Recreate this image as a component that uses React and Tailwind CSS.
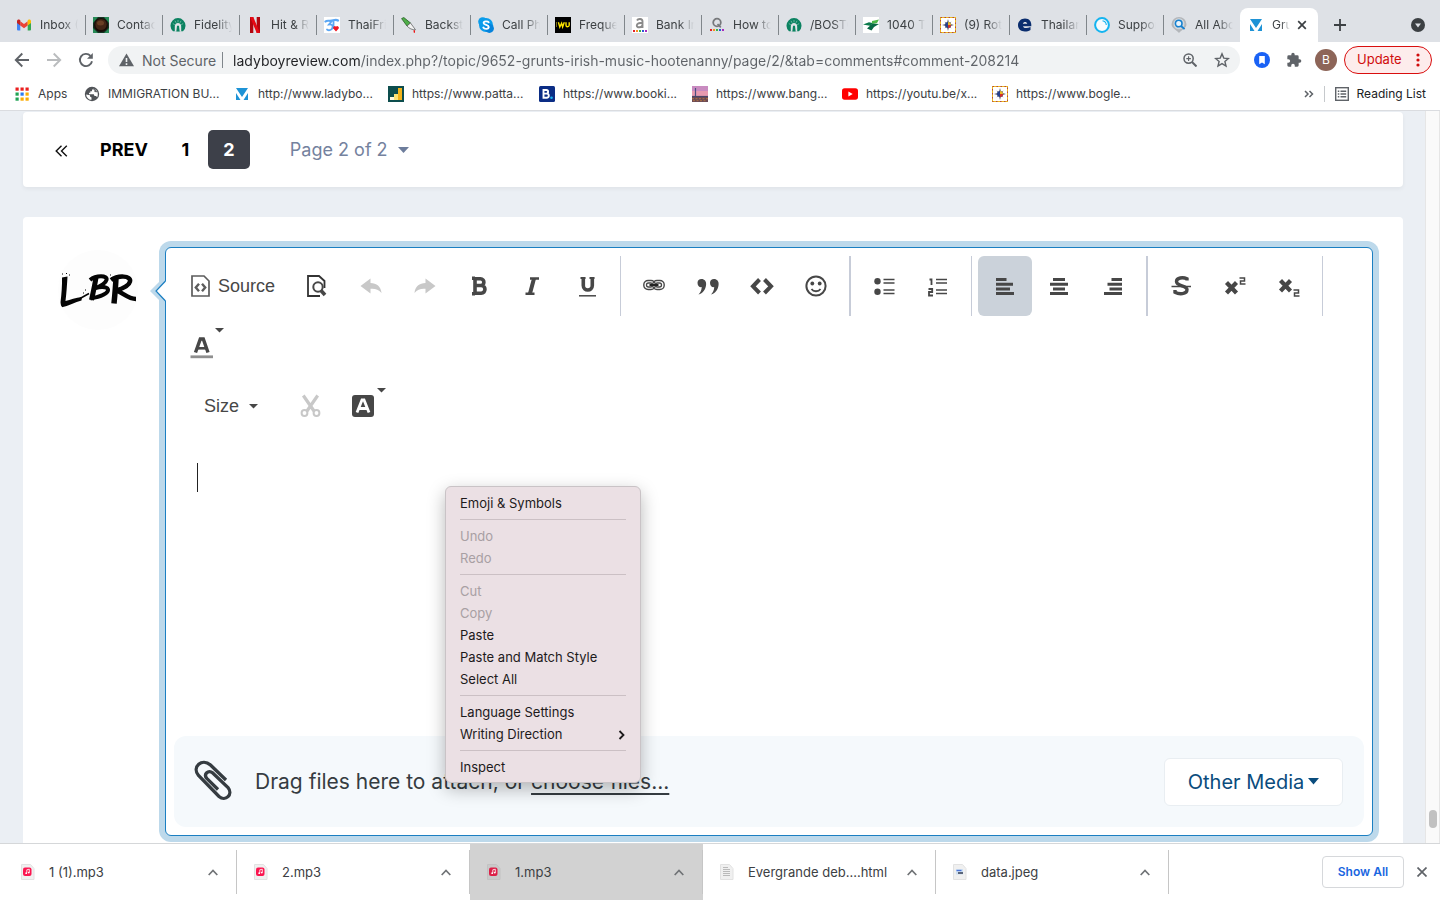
import React from "react";

const ICON = "block shrink-0";

/* ---------- favicons ---------- */

function Gmail() {
  return (
    <svg className={ICON} width="16" height="16" viewBox="0 0 16 16">
      <path d="M1 4v8.500a1 1 0 0 0 1 1h2.300V7.200z" fill="#4285f4" />
      <path d="M15 4v8.500a1 1 0 0 1-1 1h-2.300V7.200z" fill="#34a853" />
      <path d="M4.300 4.300v4.200L8 11.300l3.700-2.800V4.300L8 7.100z" fill="#ea4335" />
      <path d="M1 4.200C1 2.600 2.700 2 3.900 2.900l.4.300v5.300L1 6z" fill="#c5221f" />
      <path d="M15 4.200c0-1.600-1.700-2.200-2.900-1.300l-.4.300v5.300L15 6z" fill="#fbbc04" />
    </svg>
  );
}
function Coffee() {
  return (
    <svg className={ICON} width="16" height="16" viewBox="0 0 16 16">
      <rect width="16" height="16" fill="#163524" />
      <path d="M0 0h5L0 6zM16 0v6l-5-6zM0 16v-5l5 5zM16 16h-5l5-5z" fill="#278a57" />
      <circle cx="8" cy="8" r="7" fill="#1a0d08" />
      <circle cx="8" cy="7.500" r="5.600" fill="#432515" />
      <ellipse cx="7.500" cy="6" rx="3.500" ry="2.500" fill="#6a3f24" />
    </svg>
  );
}
function Fidelity() {
  return (
    <svg className={ICON} width="16" height="16" viewBox="0 0 16 16">
      <path d="M3 14.200A7.500 7.500 0 1 1 13 14.200z" fill="#0b8261" />
      <path d="M4.800 14.500V9.800C4.800 7.200 6 6 8 6s3.200 1.200 3.200 3.800v4.700z" fill="#dfe3e6" />
      <path d="M6.300 14.500 7 8.800h2l.7 5.700z" fill="#0b8261" />
      <path d="M8 3v2.400M5 3.800l1 2M11 3.800l-1 2M2.800 6.500l2 1.300M13.200 6.500l-2 1.300" stroke="#8cc7b5" strokeWidth="0.700" />
    </svg>
  );
}
function Netflix() {
  return (
    <svg className={ICON} width="16" height="16" viewBox="0 0 16 16">
      <path d="M3 0h3.300v16H3zM9.700 0H13v16H9.700z" fill="#b1060f" />
      <path d="M3 0h3.300L13 16H9.700z" fill="#e50914" />
    </svg>
  );
}
function ThaiFriendly() {
  return (
    <svg className={ICON} width="16" height="16" viewBox="0 0 16 16">
      <rect width="16" height="16" fill="#fff" />
      <path d="M1.500 4.500c1.500-1.500 3.500-.3 6-.8s4.500-1.500 6.500-.2" fill="none" stroke="#5aa6f4" strokeWidth="2.200" strokeLinecap="round" />
      <path d="M7.500 4.500 5 7.500c3-.3 4 .8 3.500 3-.5 2.500-3.500 3.500-5.500 2M9.500 5v6" fill="none" stroke="#5aa6f4" strokeWidth="1.800" strokeLinecap="round" />
      <path d="M12 14.500 9.300 11.500a1.600 1.600 0 0 1 2.700-1.700 1.600 1.600 0 0 1 2.700 1.700z" fill="#f01823" />
    </svg>
  );
}
function Knife() {
  return (
    <svg className={ICON} width="16" height="16" viewBox="0 0 16 16">
      <path d="M.6 1.600 2.800.5 9.500 6 6 9z" fill="#4fae49" stroke="#245c25" strokeWidth="0.800" />
      <path d="M6 9 9.500 6l5 6.800c-3 .2-6.500-1.300-8.500-3.800z" fill="#f2f2f2" stroke="#555" strokeWidth="0.700" />
      <path d="M12.500 13.200H14v2.600h-1.200z" fill="#e11" />
    </svg>
  );
}
function Skype() {
  return (
    <svg className={ICON} width="16" height="16" viewBox="0 0 16 16">
      <circle cx="8" cy="8" r="7" fill="#0a9ceb" />
      <circle cx="4.700" cy="4.700" r="4.500" fill="#0a9ceb" />
      <circle cx="11.400" cy="11.400" r="4.500" fill="#0683dc" />
      <path d="M10.700 5.300C9.700 3.900 5.600 3.900 5.600 6c0 2.300 5.200 1.600 5.200 4.100 0 2.200-4.500 2.300-5.500.4" fill="none" stroke="#fff" strokeWidth="1.800" strokeLinecap="round" />
    </svg>
  );
}
function WesternUnion() {
  return (
    <svg className={ICON} width="16" height="16" viewBox="0 0 16 16">
      <rect width="16" height="16" fill="#000" />
      <path d="M1.500 5v5" stroke="#7a6d13" />
      <path d="M3.400 5.300 4.800 10 6.600 6.300l1 3.700 1.700-4.700M11 5.300v3c0 2 3 2 3.200 0v-3" fill="none" stroke="#ffe600" strokeWidth="1.400" />
    </svg>
  );
}
function DotsRow({ y }) {
  return (
    <g>
      <rect x="1" y={y} width="2" height="2" fill="#e5202b" />
      <rect x="4" y={y} width="2" height="2" fill="#f7931e" />
      <rect x="7" y={y} width="2" height="2" fill="#39b54a" />
      <rect x="10" y={y} width="2" height="2" fill="#2a5bd7" />
      <rect x="13" y={y} width="2" height="2" fill="#a72bbf" />
    </g>
  );
}
function Agoda() {
  return (
    <svg className={ICON} width="16" height="16" viewBox="0 0 16 16">
      <rect width="16" height="16" fill="#fff" />
      <path d="M5 3.500C6 1.400 10.500 1.300 10.500 4.300v6.700M10.500 5.800C7 5.800 4.800 6.300 4.800 8.400c0 2.700 4.500 2.500 5.700-.3" fill="none" stroke="#8a8a8a" strokeWidth="1.900" />
      <DotsRow y={13} />
    </svg>
  );
}
function QDots() {
  return (
    <svg className={ICON} width="16" height="16" viewBox="0 0 16 16">
      <circle cx="8" cy="5.500" r="3.800" fill="none" stroke="#77797c" strokeWidth="1.800" />
      <path d="m8.500 7 3.300 3.300" stroke="#77797c" strokeWidth="1.700" />
      <DotsRow y={12} />
    </svg>
  );
}
function GreenBird() {
  return (
    <svg className={ICON} width="16" height="16" viewBox="0 0 16 16">
      <rect width="16" height="16" fill="#fff" />
      <path d="M0 7.500 6 5.200l3.500.8L8 9z" fill="#0b7a4b" />
      <path d="M9 4 16 2.500l-2 3.500-5 1z" fill="#4db748" />
      <path d="M4 11.500 9.500 6.500l6.500.5-5 3-2.500 3.500z" fill="#086845" />
    </svg>
  );
}
function Compass() {
  return (
    <svg className={ICON} width="16" height="16" viewBox="0 0 16 16">
      <rect width="16" height="16" fill="#fff" />
      <rect x="0.500" y="0.500" width="15" height="15" fill="none" stroke="#ecb91c" />
      <rect x="0.500" y="0.500" width="15" height="15" fill="none" stroke="#b5483f" strokeDasharray="1.500 2.500" />
      <path d="m8 2 1.200 4L11.500 4.500 10 6.800l4 1.200-4 1.200 1.500 2.300L9.200 10 8 14 6.800 10l-2.300 1.500L6 9.200 2 8l4-1.200-1.500-2.300L6.800 6z" fill="#6b6e78" />
      <circle cx="8" cy="8" r="3" fill="#26418c" />
      <path d="M8 8V5A3 3 0 0 1 11 8z" fill="#e8b923" />
      <path d="M8 8h3A3 3 0 0 1 8 11z" fill="#d22b2b" />
    </svg>
  );
}
function Expat() {
  return (
    <svg className={ICON} width="16" height="16" viewBox="0 0 16 16">
      <path d="M1 8.300C1 4.300 4 1.500 8 1.500c4.500 0 6.800 3.300 6.300 7.700H6c.5 2.300 4 2.400 7.500.8v3C11.500 14 10 14.500 8 14.500c-4.300 0-7-2.500-7-6.200zM5.800 6.700h4.400c-.2-2.300-3.800-2.400-4.400 0z" fill="#0a2d6e" fillRule="evenodd" />
    </svg>
  );
}
function Ring() {
  return (
    <svg className={ICON} width="16" height="16" viewBox="0 0 16 16">
      <circle cx="8" cy="8" r="6.900" fill="#f7fbfd" stroke="#14b4f0" strokeWidth="2" />
      <path d="M8.500 3.800A4.500 4.500 0 0 1 12.300 8" fill="none" stroke="#14b4f0" strokeWidth="1.100" />
    </svg>
  );
}
function PinSearch() {
  return (
    <svg className={ICON} width="16" height="16" viewBox="0 0 16 16">
      <path d="M8 0a7.500 7.500 0 0 1 7.500 7.200C15.500 11 11 12.500 8 16 5 12.500.5 11 .5 7.200A7.500 7.500 0 0 1 8 0z" fill="#b3b6ba" />
      <circle cx="8" cy="6.800" r="5.500" fill="#d3d8dd" />
      <circle cx="7.700" cy="6.500" r="3.300" fill="#e8f3fb" stroke="#1680cf" strokeWidth="1.600" />
      <path d="m10 9 3.600 3.200" stroke="#1680cf" strokeWidth="1.800" />
    </svg>
  );
}
function BlueV() {
  return (
    <svg className={ICON} width="14" height="14" viewBox="0 0 14 14">
      <path d="M1 1h12L7 10zM1 6l4.500 7H1zM13 6l-4.500 7H13z" fill="#1e93d6" />
    </svg>
  );
}
function Globe() {
  return (
    <svg className={ICON} width="16" height="16" viewBox="0 0 16 16">
      <circle cx="8" cy="8" r="7.200" fill="#505357" />
      <path d="M2.200 8.500 6 9.300v1.200l1.500 1v2.300C4.800 13.800 2.400 11.700 2.200 8.500z" fill="#fff" />
      <path d="M9.500 2.400 8 4v1.200H6.300v1.500H5v1.500h4.800l.7 1.800h1.500l1.200 1.200c1.500-3 .5-7.500-3.700-8.800z" fill="#fff" />
      <path d="M9.500 2.400c.5 1.300.7 1.900 2.500 2.100M10.500 5.500l2.500.3" stroke="#505357" strokeWidth="1.100" fill="none" />
    </svg>
  );
}
function Bars() {
  return (
    <svg className={ICON} width="16" height="16" viewBox="0 0 16 16">
      <rect width="16" height="16" fill="#0d4d4d" />
      <path d="M2 14v-3h4v3z" fill="#fff9dc" />
      <path d="M6 14V8h4v6z" fill="#fbe277" />
      <path d="M10 14V2h4v12z" fill="#f2b31b" />
    </svg>
  );
}
function Booking() {
  return (
    <svg className={ICON} width="16" height="16" viewBox="0 0 16 16">
      <rect width="16" height="16" rx="1.500" fill="#0b2d85" />
      <path d="M4.500 4h2.800c2.400 0 2.400 3.500 0 3.600H4.500zM4.500 7.600h3.200c2.800 0 2.800 4.200 0 4.200H4.500z" fill="none" stroke="#fff" strokeWidth="1.900" />
      <circle cx="12.500" cy="11.800" r="1.300" fill="#19b5f0" />
    </svg>
  );
}
function Skyline() {
  return (
    <svg className={ICON} width="16" height="16" viewBox="0 0 16 16">
      <rect width="16" height="6" fill="#c98bc0" />
      <rect y="5" width="16" height="6" fill="#e79ab0" />
      <rect y="10.500" width="16" height="5.500" fill="#6b4a55" />
      <path d="M3.500 2v9" stroke="#4a4f80" strokeWidth="1.200" />
      <path d="M0 10.500h16" stroke="#4a4668" strokeWidth="1.200" />
      <path d="M0 12.700h16M1 14.700h14" stroke="#b0713f" strokeDasharray="2 1.500" />
    </svg>
  );
}
function YouTube() {
  return (
    <svg className={ICON} width="16" height="16" viewBox="0 0 16 16">
      <rect y="2.300" width="16" height="11.400" rx="2.600" fill="#f00" />
      <path d="m6.400 5.500 4.300 2.500-4.300 2.500z" fill="#fff" />
    </svg>
  );
}
function AppsGrid() {
  const colors = ["#ea1f1f", "#ea1f1f", "#ea1f1f", "#22a355", "#2a7bf4", "#fbac04", "#22a355", "#fbac04", "#fbac04"];
  return (
    <svg className={ICON} width="14" height="14" viewBox="0 0 14 14">
      {colors.map((c, i) => (
        <rect key={i} x={(i % 3) * 5 + 0.500} y={Math.floor(i / 3) * 5 + 0.500} width="3.200" height="3.200" fill={c} />
      ))}
    </svg>
  );
}

const TABS = [
  ["Inbox (1)", Gmail],
  ["Contact", Coffee],
  ["Fidelity", Fidelity],
  ["Hit & Run", Netflix],
  ["ThaiFriendly", ThaiFriendly],
  ["Backstage", Knife],
  ["Call Phones", Skype],
  ["Frequent", WesternUnion],
  ["Bank In", Agoda],
  ["How to", QDots],
  ["/BOSTON", Fidelity],
  ["1040 Tax", GreenBird],
  ["(9) Roth", Compass],
  ["Thailand", Expat],
  ["Support", Ring],
  ["All About", PinSearch],
];

function TabStrip() {
  return (
    <div className="flex h-[42px] items-end bg-[#dee1e6] pl-2">
      {TABS.map(([title, Icon], i) => (
        <div key={title} className="flex h-[34px] w-[77px] min-w-0 items-center pl-2">
          <button type="button" className="flex shrink-0 items-center gap-2 text-[12px] text-[#3c4043]">
            <Icon />
            <span className="w-[38px] overflow-hidden text-left whitespace-nowrap [mask-image:linear-gradient(to_right,black_60%,transparent)]">
              {title}
            </span>
          </button>
          <span className={i === TABS.length - 1 ? "hidden" : "-mr-px ml-auto h-5 w-px shrink-0 bg-[#80868b]"} />
        </div>
      ))}
      <div className="flex h-[34px] w-[78px] shrink-0 items-center rounded-t-lg bg-white pl-[9px] text-[12px] text-[#3c4043]">
        <BlueV />
        <span className="ml-[9px] w-[18px] overflow-hidden whitespace-nowrap [mask-image:linear-gradient(to_right,black_50%,transparent)]">
          Grunts
        </span>
        <button type="button" aria-label="Close tab" className="ml-[7px]">
          <svg className={ICON} width="10" height="10" viewBox="0 0 10 10">
            <path d="m1.200 1.200 7.600 7.600M8.800 1.200 1.200 8.800" stroke="#3c4043" strokeWidth="1.700" />
          </svg>
        </button>
      </div>
      <button type="button" aria-label="New tab" className="flex h-[34px] w-11 items-center justify-center">
        <svg className={ICON} width="14" height="14" viewBox="0 0 14 14">
          <path d="M7 1v12M1 7h12" stroke="#3c4043" strokeWidth="1.800" />
        </svg>
      </button>
      <button type="button" aria-label="Search tabs" className="mr-[15px] ml-auto flex h-[34px] items-center">
        <svg className={ICON} width="14" height="14" viewBox="0 0 14 14">
          <circle cx="7" cy="7" r="7" fill="#3c4043" />
          <path d="M4 5.400h6L7 9.400z" fill="#dee1e6" />
        </svg>
      </button>
    </div>
  );
}

function NavButton({ label, color, children }) {
  return (
    <button type="button" aria-label={label} className="flex h-7 w-8 items-center justify-center">
      <svg className={ICON} width="16" height="16" viewBox="0 0 16 16" fill="none" stroke={color} strokeWidth="1.900">
        {children}
      </svg>
    </button>
  );
}

function AddressRow() {
  return (
    <div className="flex h-9 items-center bg-white pr-2 pl-[6px]">
      <NavButton label="Back" color="#5f6368"><path d="M15 8H2M8.300 1.500 1.800 8l6.500 6.500" /></NavButton>
      <NavButton label="Forward" color="#babcbe"><path d="M1 8h13M7.700 1.500 14.200 8l-6.500 6.500" /></NavButton>
      <NavButton label="Reload" color="#5f6368">
        <path d="M14 9.200A6.100 6.100 0 1 1 12.500 3.800" />
        <path d="M14.800 1v5.800H9z" fill="#5f6368" stroke="none" />
      </NavButton>
      <div className="ml-[6px] flex h-7 min-w-0 flex-1 items-center rounded-full bg-[#f1f3f4] pr-[2px] pl-[11px] text-[14px]">
        <svg className={ICON} width="15" height="14" viewBox="0 0 15 14">
          <path d="M7.500.5 15 13.300H0z" fill="#5f6368" />
          <path d="M7.500 5v4M7.500 10.300v1.600" stroke="#f1f3f4" strokeWidth="1.600" />
        </svg>
        <span className="ml-2 shrink-0 text-[#5f6368]">Not Secure</span>
        <span className="mr-[10px] ml-[6px] h-4 w-px shrink-0 bg-[#80868b]" />
        <input
          type="text"
          aria-label="Address"
          defaultValue="ladyboyreview.com/index.php?/topic/9652-grunts-irish-music-hootenanny/page/2/&tab=comments#comment-208214"
          className="min-w-0 flex-1 bg-[linear-gradient(to_right,#202124_127px,#5f6368_127px)] bg-clip-text text-transparent outline-none"
        />
        <button type="button" aria-label="Zoom" className="flex w-8 justify-center">
          <svg className={ICON} width="14" height="14" viewBox="0 0 14 14" fill="none" stroke="#5f6368" strokeWidth="1.500">
            <circle cx="5.600" cy="5.600" r="4.600" />
            <path d="m9 9 4.500 4.500" strokeWidth="2" />
            <path d="M5.600 3.300v4.600M3.300 5.600h4.600" strokeWidth="1.100" />
          </svg>
        </button>
        <button type="button" aria-label="Bookmark this page" className="flex w-8 justify-center">
          <svg className={ICON} width="16" height="16" viewBox="0 0 16 16" fill="none" stroke="#5f6368" strokeWidth="1.400">
            <path d="m8 1.900 1.800 4.200 4.600.4-3.500 3 1.100 4.500L8 11.600 4 14l1.100-4.500-3.500-3 4.600-.4z" />
          </svg>
        </button>
      </div>
      <div className="ml-[14px] flex shrink-0 items-center gap-4">
        <button type="button" aria-label="Saved pages">
          <svg className={ICON} width="16" height="16" viewBox="0 0 16 16">
            <circle cx="8" cy="8" r="8" fill="#1a62f5" />
            <path d="M5.200 4h5.600v8.300L8 10.400l-2.800 1.900z" fill="#fff" />
          </svg>
        </button>
        <button type="button" aria-label="Extensions">
          <svg className={ICON} width="16" height="16" viewBox="0 0 24 24" fill="#5f6368">
            <path d="M20.500 11H19V7a2 2 0 0 0-2-2h-4V3.500a2.500 2.500 0 0 0-5 0V5H4a2 2 0 0 0-2 2v3.800h1.500a2.700 2.700 0 0 1 0 5.400H2V20a2 2 0 0 0 2 2h3.800v-1.500a2.700 2.700 0 0 1 5.400 0V22H17a2 2 0 0 0 2-2v-4h1.500a2.500 2.500 0 0 0 0-5z" />
          </svg>
        </button>
      </div>
      <button type="button" className="ml-[13px] size-[22px] shrink-0 rounded-full bg-[#8d6558] text-center text-[12px] leading-[22px] text-white">
        B
      </button>
      <button type="button" className="ml-[7px] flex h-7 w-[88px] shrink-0 items-center justify-between rounded-full border border-[#d90e0e] bg-[#fdecec] pr-[11px] pl-3 text-[13px] text-[#d00c0c]">
        Update
        <svg className={ICON} width="4" height="14" viewBox="0 0 4 14" fill="#d00c0c">
          <circle cx="2" cy="2" r="1.600" />
          <circle cx="2" cy="7" r="1.600" />
          <circle cx="2" cy="12" r="1.600" />
        </svg>
      </button>
    </div>
  );
}

const BOOKMARKS = [
  ["Apps", AppsGrid, "w-[70px]"],
  ["IMMIGRATION BU...", Globe, "w-[150px]"],
  ["http://www.ladybo...", BlueV, "w-[154px]"],
  ["https://www.patta...", Bars, "w-[151px]"],
  ["https://www.booki...", Booking, "w-[153px]"],
  ["https://www.bang...", Skyline, "w-[150px]"],
  ["https://youtu.be/x...", YouTube, "w-[150px]"],
  ["https://www.bogle...", Compass, "w-[150px]"],
];

function BookmarksRow() {
  return (
    <nav aria-label="Bookmarks" className="flex h-[33px] items-center border-b border-[#dadce0] bg-white pr-[14px] pl-[14px] text-[12px] text-[#3c4043]">
      {BOOKMARKS.map(([text, Icon, width]) => (
        <a key={text} href="#bookmark" className={"flex shrink-0 items-center gap-2 whitespace-nowrap " + width}>
          <span className="flex min-w-4 justify-center">
            <Icon />
          </span>
          {text}
        </a>
      ))}
      <button type="button" aria-label="More bookmarks" className="ml-auto">
        <svg className={ICON} width="10" height="8" viewBox="0 0 10 8" fill="none" stroke="#5f6368" strokeWidth="1.500">
          <path d="m1 1 3 3-3 3M5.500 1l3 3-3 3" />
        </svg>
      </button>
      <span className="mx-[10px] h-4 w-px bg-[#c6c9cc]" />
      <a href="#reading-list" className="flex items-center gap-2 text-[#202124]">
        <svg className={ICON} width="14" height="14" viewBox="0 0 14 14" fill="none" stroke="#5f6368" strokeWidth="1.400">
          <rect x="0.700" y="0.700" width="12.600" height="12.600" />
          <path d="M2.800 4.200h1.500M5.500 4.200h5.700M2.800 7h1.500M5.500 7h5.700M2.800 9.800h1.500M5.500 9.800h5.700" />
        </svg>
        Reading List
      </a>
    </nav>
  );
}

function Pagination() {
  return (
    <nav aria-label="Pagination" className="flex h-[75px] items-center rounded bg-white pl-8 text-[18px] shadow-[0_2px_4px_rgba(0,0,0,0.05)]">
      <a href="#first" aria-label="First page" className="mt-[3px]">
        <svg className={ICON} width="13" height="12" viewBox="0 0 13 12" fill="none" stroke="#111" strokeWidth="1.400">
          <path d="M6.500.8 1.200 6l5.300 5.200M11.800.8 6.500 6l5.300 5.200" />
        </svg>
      </a>
      <a href="#prev" className="ml-8 font-bold text-black">PREV</a>
      <a href="#1" className="ml-8 w-[11px] text-center font-bold text-black">1</a>
      <a href="#2" aria-current="page" className="ml-[17px] flex h-[39px] w-[42px] items-center justify-center rounded-[5px] bg-[#3d4049] font-bold text-white">
        2
      </a>
      <button type="button" className="ml-10 flex items-center gap-[10px] text-[#74829e]">
        Page 2 of 2
        <svg className={ICON} width="11" height="6" viewBox="0 0 11 6">
          <path d="M0 0h11L5.500 6z" fill="#6d7d9c" />
        </svg>
      </button>
    </nav>
  );
}

/* ---------- editor toolbar ---------- */

function Tool({ label, active, disabled, children }) {
  return (
    <button
      type="button"
      aria-label={label}
      disabled={disabled}
      className={"flex h-[60px] w-[54px] items-center justify-center rounded-md " + (active ? "bg-[#cbd2da]" : "bg-transparent")}
    >
      <svg className={ICON} width="24" height="24" viewBox="0 0 24 24" fill="none" stroke="#474747">
        {children}
      </svg>
    </button>
  );
}
function Separator({ thick }) {
  return <span className={"mx-[6px] h-[60px] shrink-0 bg-[#c7ccd8] " + (thick ? "w-0.5" : "w-px")} />;
}
function CaretDown() {
  return (
    <svg className={ICON} width="9" height="5" viewBox="0 0 9 5">
      <path d="M0 0h9L4.500 4.500z" fill="#474747" />
    </svg>
  );
}

function Toolbar() {
  return (
    <div role="toolbar" aria-label="Formatting" className="px-2 pt-2 font-['Liberation_Sans',Arial,sans-serif] text-[18px] text-[#474747]">
      <div className="flex h-[60px] items-center">
        <button type="button" className="flex h-[60px] w-[116px] items-center gap-2 pl-[17px]">
          <svg className={ICON} width="19" height="22" viewBox="0 0 19 22" fill="none" stroke="#5c5c5c" strokeWidth="1.700">
            <path d="M1 1h12l5 5v15H1z" />
            <path d="M8 8.800 4.800 12.500 8 16.200M11 8.800l3.200 3.700-3.200 3.700" strokeWidth="2.400" />
          </svg>
          Source
        </button>
        <Tool label="Preview">
          <path d="M15 22H3V2h11l5.500 5v7" stroke="#333" strokeWidth="1.800" />
          <circle cx="13" cy="13" r="4.700" strokeWidth="2" />
          <path d="m16 16.500 4 4.500" strokeWidth="3.600" />
        </Tool>
        <Tool label="Undo" disabled>
          <path d="M1.500 12 11.500 4.500V9c6 0 10.500 3.500 11 10-3-3.500-6-4.500-11-4.200v4.700z" fill="#c8c8c8" stroke="none" />
        </Tool>
        <Tool label="Redo" disabled>
          <path d="M22.500 12 12.500 4.500V9c-6 0-10.500 3.500-11 10 3-3.500 6-4.500 11-4.200v4.700z" fill="#c8c8c8" stroke="none" />
        </Tool>
        <Tool label="Bold">
          <path d="M8 4.800h5.500c4.500 0 4.500 6.700 0 6.700H8zM8 11.500h6.200c5 0 5 7.700 0 7.700H8zM5 4.300h3M5 19.700h3" strokeWidth="3.600" />
        </Tool>
        <Tool label="Italic">
          <path d="M9 4.500h9M4.500 19.700h9" strokeWidth="2.400" />
          <path d="M13 4.500 9 19.500" strokeWidth="4" />
        </Tool>
        <Tool label="Underline">
          <path d="M8.300 3v8.500c0 6 9 6 9 0V3" strokeWidth="3.600" />
          <path d="M5.500 4h5M14.500 4h5" strokeWidth="1.800" />
          <path d="M4 21.800h17" strokeWidth="1.500" />
        </Tool>
        <Separator />
        <Tool label="Link">
          <rect x="1.800" y="6.500" width="11.500" height="9" rx="4.300" strokeWidth="1.400" />
          <rect x="10.700" y="6.500" width="11.500" height="9" rx="4.300" strokeWidth="1.400" />
          <rect x="4.500" y="9" width="6" height="4" rx="2" strokeWidth="1.300" />
          <rect x="13.500" y="9" width="6" height="4" rx="2" strokeWidth="1.300" />
          <path d="M7.500 11h9" stroke="#222" strokeWidth="2" />
        </Tool>
        <Tool label="Quote">
          <path d="M1.500 8.700a4 4 0 0 1 4-3.700c3 0 5 2.200 4.600 5.800-.5 5-3.300 8.500-7.600 9.800 1.800-2 3.200-4.500 3.200-7.500-2.200.5-4.300-1.500-4.200-4.400zM14 8.700a4 4 0 0 1 4-3.700c3 0 5 2.200 4.600 5.800-.5 5-3.300 8.500-7.600 9.800 1.800-2 3.200-4.500 3.200-7.500-2.200.5-4.300-1.500-4.200-4.400z" fill="#474747" stroke="none" />
        </Tool>
        <Tool label="Code">
          <path d="M9.500 5.500 3 12.300l6.500 6.700M14.500 5.500 21 12.300 14.500 19" strokeWidth="4" />
        </Tool>
        <Tool label="Emoji">
          <circle cx="12" cy="12" r="9.600" strokeWidth="2" />
          <circle cx="8.300" cy="9.500" r="1.900" fill="#474747" stroke="none" />
          <circle cx="15.700" cy="9.500" r="1.900" fill="#474747" stroke="none" />
          <path d="M7.500 15c2 3 7 3 9 0" strokeWidth="1.800" />
        </Tool>
        <Separator thick />
        <Tool label="Bulleted list">
          <circle cx="5.500" cy="7.300" r="3.200" fill="#474747" stroke="none" />
          <circle cx="5.500" cy="17.800" r="3.200" fill="#474747" stroke="none" />
          <path d="M11.500 5.500h11M11.500 9h11M11.500 16h11M11.500 19.500h11" strokeWidth="1.500" />
        </Tool>
        <Tool label="Numbered list">
          <path d="M3.500 5.500h2V11M2.500 15h3.700v3H3v3.500h4" strokeWidth="1.800" />
          <path d="M10 5.500h11M10 9h11M10 16h11M10 19.500h11" strokeWidth="1.500" />
        </Tool>
        <Separator />
        <Tool label="Align left" active>
          <path d="M3 5.500h10.500M3 10.300h17M3 15h14M3 19.500h18" strokeWidth="3" />
        </Tool>
        <Tool label="Align center">
          <path d="M6 5.500h12M3 10.300h18M6 15h12M3 19.500h18" strokeWidth="3" />
        </Tool>
        <Tool label="Align right">
          <path d="M10.500 5.500H21M6.500 10.300H21M8.500 15H21M3 19.500h18" strokeWidth="3" />
        </Tool>
        <Separator thick />
        <Tool label="Strikethrough">
          <path d="M18 6.500V4.800C14 3 7.500 3.500 7.500 7.500c0 5 10.500 3.500 10.500 8 0 5-8 5-12 2.700V16" strokeWidth="3.400" />
          <path d="M2.500 12.500h19.500" strokeWidth="1.500" />
        </Tool>
        <Tool label="Superscript">
          <path d="m3.500 8.500 10 10.500M13.500 8.500 3.500 19" strokeWidth="4.200" />
          <path d="M16.500 4h5v3h-4v3h5" strokeWidth="1.500" />
        </Tool>
        <Tool label="Subscript">
          <path d="m3.500 6.500 10 10.500M13.500 6.500 3.500 17" strokeWidth="4.200" />
          <path d="M16.500 16h5v3h-4v3h5" strokeWidth="1.500" />
        </Tool>
        <Separator />
      </div>
      <div className="flex h-[60px] items-center">
        <button type="button" aria-label="Text colour" className="flex h-[60px] items-start gap-px pt-3 pl-4">
          <svg className="mt-2 block" width="24" height="24" viewBox="0 0 24 24" fill="none" stroke="#474747">
            <path d="M5.500 16.500 10.300 3h3L18 16.500" strokeWidth="3.400" />
            <path d="M7.500 12.300h9" strokeWidth="2.600" />
            <path d="M.5 20.800h22.500" stroke="#8f8f8f" strokeWidth="2.800" />
          </svg>
          <CaretDown />
        </button>
      </div>
      <div className="flex h-[60px] items-center">
        <button type="button" className="flex h-[60px] w-[109px] items-center gap-[10px] pl-[30px]">
          Size
          <CaretDown />
        </button>
        <Tool label="Cut" disabled>
          <g stroke="#c8c8c8">
            <circle cx="6.500" cy="19" r="2.900" strokeWidth="2" />
            <circle cx="18.500" cy="19" r="2.900" strokeWidth="2" />
            <path d="M5.300 1.500 16 17M19.700 1.500 9 17" strokeWidth="3.200" />
          </g>
        </Tool>
        <button type="button" aria-label="Background colour" className="flex h-[60px] items-start gap-[3px] pt-3 pl-[15px]">
          <svg className="mt-[7px] block" width="22" height="22" viewBox="0 0 22 22">
            <rect width="22" height="22" rx="3" fill="#474747" />
            <path d="M5 17.500 10 5h2l5 12.500M7 13.500h8" fill="none" stroke="#fff" strokeWidth="2.800" />
          </svg>
          <CaretDown />
        </button>
      </div>
    </div>
  );
}

/* Brush-lettered avatar mark */
function Avatar() {
  return (
    <div className="mt-[33px] ml-[35px] size-20 shrink-0 overflow-hidden rounded-full bg-[#fdfdfd]">
      <svg className={ICON} width="80" height="80" viewBox="0 0 80 80" fill="none" stroke="#050505" role="img" aria-label="LBR" strokeLinejoin="round">
        <path d="M4 27.500 9.500 26.500C9 35 8.500 43 7.500 51c5-1 10-3.500 16.500-4l-.5 3.500C17 52 11 56 3 57.500c-1.500-1-.5-3-.5-5C3.500 44 4.200 36 4 27.500z" fill="#050505" stroke="none" />
        <path d="m22 48.500 9-5" strokeWidth="1.500" />
        <path d="M38 27.500C37 34 35.500 41 33.500 50" strokeWidth="5" />
        <path d="M32 30c6-5 18-5 16.500 0-1 3.500-6 6-11 8 7-2 13.500-1 12.500 2.500s-9 6.500-17.500 8" strokeWidth="4" />
        <path d="M58 27.500c-.3 8-1 16-2 26" strokeWidth="5.500" />
        <path d="M53 30c7-5 20.500-4.500 19 1.500C71 36 65 38.500 58 40.500c6 1.500 12 8.500 20 8.500" strokeWidth="4.500" />
        <path d="M4 24h1M8 23.500h1M11 25h1M27 40h1M25 43h1M52 25h1M53 28h1" strokeWidth="1" />
      </svg>
    </div>
  );
}

function Uploader() {
  return (
    <div className="mx-2 mb-2 flex h-[91px] items-center rounded-xl bg-[#f5f9fc] pr-[21px] pl-[19px] text-[20px]">
      <svg className={"mb-[3px] " + ICON} width="40" height="42" viewBox="0 0 40 42" fill="none" stroke="#353c41" strokeWidth="3.300">
        <path d="M33 21 17.500 6C9-1.500-1.500 8 5.500 16.500L26 37.500C32.500 43 40.500 35.500 35 28.500L19.500 13.800C15.500 10.300 10 15.200 14 19.700L25 30.500" />
      </svg>
      <p className="ml-[22px] text-[21px] whitespace-nowrap text-[#353c41]">
        Drag files here to attach, or{" "}
        <a href="#choose" className="underline decoration-2 underline-offset-4">choose files...</a>
      </p>
      <button type="button" className="ml-auto flex h-12 w-[179px] items-center justify-center gap-1 rounded-md border border-[#e9eef2] bg-white text-[#0a4c7d]">
        Other Media
        <svg className={ICON} width="11" height="7" viewBox="0 0 11 7">
          <path d="M0 0h11L5.500 6.500z" fill="#0a4c7d" />
        </svg>
      </button>
    </div>
  );
}

function Editor() {
  return (
    <section className="flex min-h-0 flex-1 rounded-t bg-white pr-[30px]">
      <Avatar />
      <div className="relative mt-[30px] mb-[7px] ml-[27px] flex min-w-0 flex-1 flex-col rounded-md border border-[#1b7fc2] bg-white ring-6 ring-[#bdd9eb]">
        <svg className="absolute top-[32px] -left-[17px]" width="18" height="22" viewBox="0 0 18 22">
          <path d="M11 1 1 11l10 10h7V1z" fill="#bdd9eb" />
          <path d="M18 1h-1L7 11l10 10h1z" fill="#fff" />
          <path d="M16.500 1 7 11l9.500 10" fill="none" stroke="#1b7fc2" strokeWidth="1.200" />
        </svg>
        <Toolbar />
        <div className="relative flex min-h-0 flex-1 flex-col">
          <textarea aria-label="Reply" className="w-full flex-1 resize-none px-8 pt-6 text-[20px] caret-transparent outline-none" />
          <span className="absolute top-[27px] left-[31px] h-[29px] w-px bg-[#222]" />
        </div>
        <Uploader />
      </div>
    </section>
  );
}

const MENU = [
  ["Emoji & Symbols"],
  ["-Undo", "-Redo"],
  ["-Cut", "-Copy", "Paste", "Paste and Match Style", "Select All"],
  ["Language Settings", "Writing Direction"],
  ["Inspect"],
];

function ContextMenu() {
  return (
    <div role="menu" className="absolute top-[486px] left-[445px] w-[196px] rounded-md border border-[#c9c3c6] bg-[#ebe0e4] px-[14px] pt-[5px] pb-1 text-[13px] text-[#1d1a1b] shadow-[0_6px_18px_rgba(0,0,0,0.28)]">
      {MENU.map((group, g) => (
        <div key={g} className={g ? "mt-[5px] border-t border-[#cbc0c4] pt-[5px]" : ""}>
          {group.map((entry) => {
            const disabled = entry.startsWith("-");
            const text = disabled ? entry.slice(1) : entry;
            return (
              <button
                key={text}
                type="button"
                role="menuitem"
                disabled={disabled}
                className={"flex h-[22px] w-full items-center justify-between pt-0.5 whitespace-nowrap " + (disabled ? "text-[#a89fa3]" : "")}
              >
                {text}
                {text === "Writing Direction" && (
                  <svg className={ICON} width="8" height="10" viewBox="0 0 8 10" fill="none" stroke="#1d1a1b" strokeWidth="1.800">
                    <path d="m1.500 1 4 4-4 4" />
                  </svg>
                )}
              </button>
            );
          })}
        </div>
      ))}
    </div>
  );
}

function FileIcon({ kind }) {
  return (
    <svg className={ICON} width="15" height="16" viewBox="0 0 15 16">
      <path d="M1.500.5h9l3.500 4v11H1.500z" fill={kind === "dim" ? "#c9c9c9" : "#f0f0f0"} stroke={kind === "dim" ? "#c2c2c2" : "#e2e2e2"} />
      {(kind === "audio" || kind === "dim") && (
        <g>
          <rect x="3" y="3.500" width="8.500" height="8.500" rx="2" fill={kind === "dim" ? "#dc2048" : "#fb1650"} />
          <path d="M6.800 9V5.800l2.500-.6v3.200" fill="none" stroke="#fff" strokeWidth="0.800" />
          <circle cx="6.200" cy="9.200" r="0.900" fill="#fff" />
          <circle cx="8.800" cy="8.600" r="0.900" fill="#fff" />
        </g>
      )}
      {kind === "doc" && <path d="M4 3.500h5M4 5.500h7M4 7.500h7M4 9.500h7M4 11.500h7" stroke="#b3b3b3" strokeWidth="0.900" />}
      {kind === "image" && (
        <g>
          <rect x="4" y="5" width="7" height="5.500" fill="#cfe0f2" />
          <path d="M4.500 6.500h5" stroke="#4a74d8" strokeWidth="1.300" />
          <path d="M6 9h5" stroke="#1c2438" strokeWidth="1.300" />
        </g>
      )}
    </svg>
  );
}

const DOWNLOADS = [
  ["1 (1).mp3", "audio"],
  ["2.mp3", "audio"],
  ["1.mp3", "dim"],
  ["Evergrande deb....html", "doc"],
  ["data.jpeg", "image"],
];

function Downloads() {
  return (
    <footer className="flex h-[57px] shrink-0 items-center border-t border-[#d5d7d9] bg-white pl-1 text-[13px] text-[#3c4043]">
      {DOWNLOADS.map(([name, kind]) => (
        <div key={name} className={"flex h-full w-[233px] shrink-0 items-center " + (kind === "dim" ? "bg-[#d2d2d2]" : "")}>
          <div className="flex h-11 w-full items-center border-r border-[#c6c6c6] pr-[18px] pl-4">
            <button type="button" className="flex items-center gap-[14px] whitespace-nowrap">
              <FileIcon kind={kind} />
              <span className="pt-0.5">{name}</span>
            </button>
            <button type="button" aria-label={"Options for " + name} className="ml-auto">
              <svg className={ICON} width="10" height="7" viewBox="0 0 10 7" fill="none" stroke="#707376" strokeWidth="1.700">
                <path d="m.7 6 4.300-4.500L9.300 6" />
              </svg>
            </button>
          </div>
        </div>
      ))}
      <button type="button" className="ml-auto h-8 w-[82px] rounded border border-[#d6d8db] text-[12px] font-semibold text-[#1a66e0]">
        Show All
      </button>
      <button type="button" aria-label="Close downloads bar" className="mr-[13px] ml-[13px]">
        <svg className={ICON} width="10" height="10" viewBox="0 0 10 10">
          <path d="m.5.500 9 9M9.500.500l-9 9" stroke="#5f6368" strokeWidth="1.700" />
        </svg>
      </button>
    </footer>
  );
}

export default function App() {
  return (
    <div className="relative flex h-screen flex-col overflow-hidden bg-white font-['Inter',sans-serif]">
      <header className="shrink-0">
        <TabStrip />
        <AddressRow />
        <BookmarksRow />
      </header>
      <div className="flex min-h-0 flex-1 bg-[#ebeff4]">
        <main className="flex min-w-0 flex-1 flex-col gap-[30px] pt-px pr-[22px] pl-[23px]">
          <Pagination />
          <Editor />
        </main>
        <div className="flex w-[15px] shrink-0 flex-col justify-end border-x border-[#e6e6e6] bg-[#fafafa] px-[3px] pb-[15px]">
          <span className="h-[18px] w-2 rounded-full bg-[#c1c1c1]" />
        </div>
      </div>
      <Downloads />
      <ContextMenu />
    </div>
  );
}
